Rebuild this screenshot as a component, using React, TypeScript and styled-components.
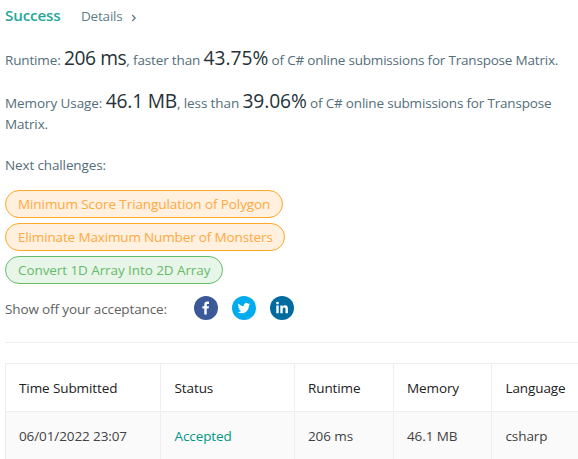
import React from "react";
import styled, { createGlobalStyle } from "styled-components";

const GlobalStyle = createGlobalStyle`
  * { box-sizing: border-box; }
  html, body { margin: 0; background: #fff; overflow: hidden; }
  body { font: 13.5px/21px "Open Sans", "Noto Sans", sans-serif; color: #546e7a; }
`;

const Page = styled.main`
  width: 578px;
  height: 459px;
  overflow: hidden;
  padding-left: 5px;
`;

const Header = styled.header`
  display: flex;
  align-items: baseline;
  height: 50px;
  padding-top: 5px;
`;

const Run = styled.span<{ $ls?: number }>`
  letter-spacing: ${(p) => p.$ls ?? 0}px;
`;

const Success = styled.span`
  font-size: 15.2px;
  font-weight: 600;
  color: #26a69a;
  width: 76px;
  letter-spacing: -0.15px;
`;

const Details = styled.a`
  display: flex;
  align-items: center;
  gap: 8px;
  color: #607d8b;
`;

const Chevron = styled.svg`
  width: 6px;
  height: 8px;
  margin-top: 3px;
`;

const Result = styled.p<{ $gap: number }>`
  margin: 0 0 ${(p) => p.$gap}px;
  white-space: nowrap;
`;

const Figure = styled.span<{ $ls?: number }>`
  font-size: 19.2px;
  line-height: 0;
  color: #263238;
  font-weight: 400;
  letter-spacing: ${(p) => p.$ls ?? 0}px;
`;

const Challenges = styled.div`
  display: flex;
  flex-direction: column;
  align-items: flex-start;
  gap: 5px;
`;

const Pill = styled.a<{ $easy?: boolean; $w: number; $ls?: number }>`
  width: ${(p) => p.$w}px;
  height: 28px;
  padding-left: 12px;
  border: 1px solid ${(p) => (p.$easy ? "#66bb6a" : "#ffa726")};
  border-radius: 14px;
  background: ${(p) => (p.$easy ? "#e8f5e9" : "#fff0df")};
  color: ${(p) => (p.$easy ? "#66bb6a" : "#ffa940")};
  line-height: 26px;
  white-space: nowrap;
  letter-spacing: ${(p) => p.$ls ?? 0}px;
`;

const Share = styled.div`
  display: flex;
  align-items: center;
  height: 59px;
  padding-bottom: 11px;
  border-bottom: 1px solid #eee;
  margin-bottom: 20px;
`;

const ShareLabel = styled.span`
  width: 189px;
  padding-top: 4px;
  color: #616161;
  letter-spacing: -0.13px;
`;

const Icons = styled.div`
  display: flex;
  gap: 14px;
  svg { display: block; width: 24px; height: 24px; }
`;

const Table = styled.table`
  width: 600px;
  table-layout: fixed;
  border-collapse: separate;
  border-spacing: 0;
  border-top: 1px solid #eee;
  border-left: 1px solid #eee;
`;

const Col = styled.col<{ $w: number }>`
  width: ${(p) => p.$w}px;
`;

const Cell = styled.td<{ $head?: boolean; $ok?: boolean }>`
  height: 48px;
  padding: 2px 0 0 13px;
  border-right: 1px solid #eee;
  border-bottom: 1px solid #eee;
  background: ${(p) => (p.$head ? "#fff" : "#fafafa")};
  color: ${(p) => (p.$ok ? "#009688" : p.$head ? "#212121" : "#424242")};
  white-space: nowrap;
  letter-spacing: -0.1px;

  &:nth-child(2),
  &:nth-child(5) {
    padding-left: 13.5px;
  }
`;

export default function App() {
  return (
    <>
      <GlobalStyle />
      <Page>
        <Header>
          <Success>Success</Success>
          <Details>
            <Run $ls={-0.2}>Details</Run>
            <Chevron viewBox="0 0 6 8" fill="none" stroke="currentColor" strokeWidth="1.3">
              <path d="M1.2 1 4.2 4 1.2 7" />
            </Chevron>
          </Details>
        </Header>
        <Result $gap={22}>
          <Run $ls={-0.15}>Runtime: </Run>
          <Figure $ls={-0.4}>206 ms</Figure>
          <Run $ls={-0.15}>, faster than </Run>
          <Figure $ls={0}>43.75%</Figure>
          <Run $ls={-0.2}> of C# online submissions for Transpose Matrix.</Run>
        </Result>
        <Result $gap={20}>
          <Run $ls={-0.08}>Memory Usage: </Run>
          <Figure $ls={-0.2}>46.1 MB</Figure>
          <Run $ls={-0.1}>, less than </Run>
          <Figure $ls={-0.1}>39.06%</Figure>
          <Run $ls={-0.18}> of C# online submissions for Transpose</Run>
          <br />
          <Run $ls={-0.15}>Matrix.</Run>
        </Result>
        <Result $gap={14}>
          <Run $ls={-0.13}>Next challenges:</Run>
        </Result>
        <Challenges>
          <Pill $w={278} $ls={-0.09}>Minimum Score Triangulation of Polygon</Pill>
          <Pill $w={280} $ls={-0.15}>Eliminate Maximum Number of Monsters</Pill>
          <Pill $w={218} $ls={-0.08} $easy>Convert 1D Array Into 2D Array</Pill>
        </Challenges>
        <Share>
          <ShareLabel>Show off your acceptance:</ShareLabel>
          <Icons>
            <svg viewBox="0 0 24 24">
              <circle cx="12" cy="12" r="12" fill="#3b5998" />
              <path fill="#fff" d="M10.3 18.500v-6H8.400v-2.300h1.900V8.700c0-2.200 1.100-3.100 3-3.100.8 0 1.400.1 1.700.1v2.200h-1.200c-.9 0-1.100.5-1.100 1.100v1.200h2.300l-.4 2.300h-1.900v6z" />
            </svg>
            <svg viewBox="0 0 24 24">
              <circle cx="12" cy="12" r="12" fill="#00aced" />
              <path fill="#fff" d="M18.200 8.200c-.5.2-1 .3-1.500.4.5-.3.9-.8 1.100-1.400-.5.3-1 .5-1.600.6a2.570 2.570 0 0 0-4.400 2.300c-2.100-.1-4-1.100-5.300-2.700-.7 1.200-.3 2.700.8 3.500-.4 0-.8-.1-1.200-.3 0 1.200.9 2.300 2.100 2.500-.4.1-.8.1-1.200 0 .3 1 1.300 1.800 2.400 1.800a5.200 5.200 0 0 1-3.800 1.100c5.200 3.200 11.500-.4 11.300-6.500.5-.4 1-.8 1.300-1.300z" />
            </svg>
            <svg viewBox="0 0 24 24">
              <circle cx="12" cy="12" r="12" fill="#006b9f" />
              <path fill="#fff" d="M6.300 9.500h2.400v7.800H6.300zM10.300 9.500h2.300v1.100c.4-.7 1.200-1.300 2.400-1.300 2.400 0 2.900 1.600 2.900 3.700v4.300h-2.400v-3.800c0-.9 0-2.100-1.300-2.100s-1.500 1-1.500 2v3.900h-2.400z" />
              <circle cx="7.5" cy="7.1" r="1.4" fill="#fff" />
            </svg>
          </Icons>
        </Share>
        <Table>
          <colgroup>
            <Col $w={155} />
            <Col $w={134} />
            <Col $w={99} />
            <Col $w={98} />
            <Col $w={113} />
          </colgroup>
          <tbody>
            <tr>
              <Cell $head>Time Submitted</Cell>
              <Cell $head>Status</Cell>
              <Cell $head>Runtime</Cell>
              <Cell $head>Memory</Cell>
              <Cell $head>Language</Cell>
            </tr>
            <tr>
              <Cell>06/01/2022 23:07</Cell>
              <Cell $ok>Accepted</Cell>
              <Cell>206 ms</Cell>
              <Cell>46.1 MB</Cell>
              <Cell>csharp</Cell>
            </tr>
          </tbody>
        </Table>
      </Page>
    </>
  );
}
